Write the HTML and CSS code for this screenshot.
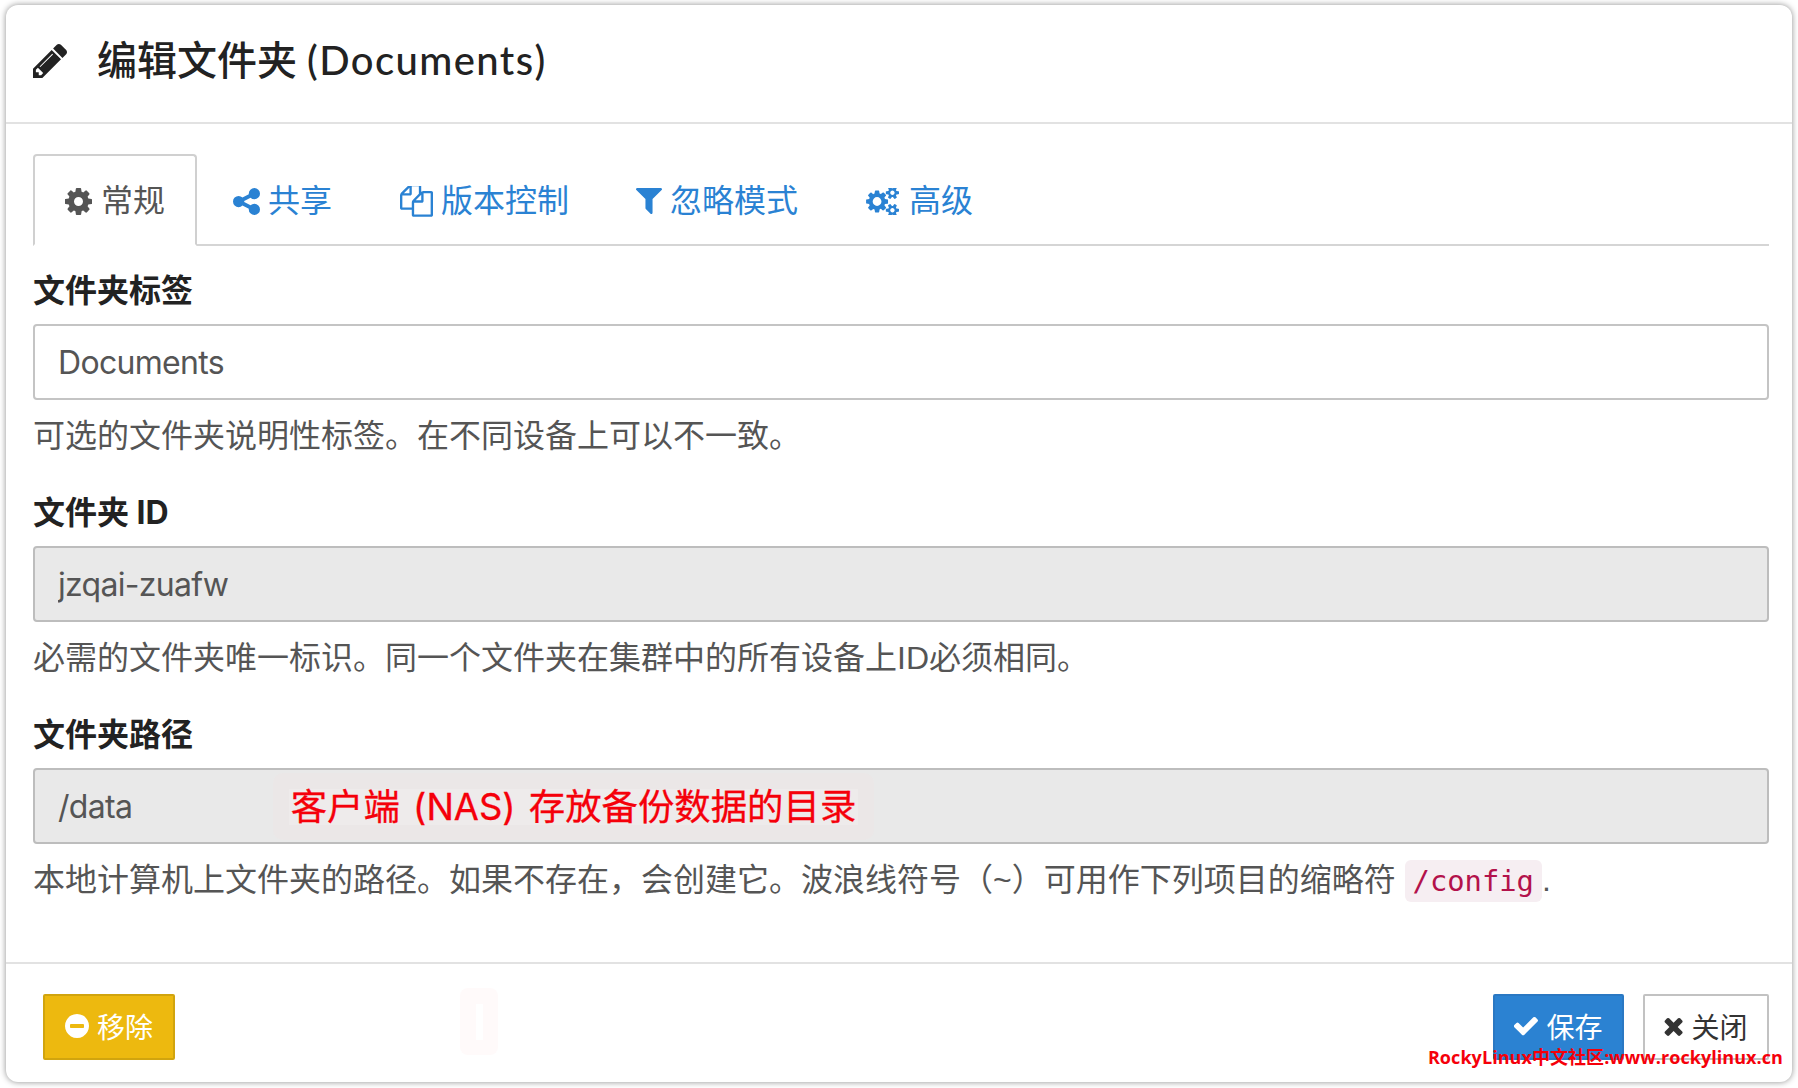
FILE: index.html
```html
<!DOCTYPE html>
<html lang="zh-CN">
<head>
    <meta charset="UTF-8">
    <title>编辑文件夹 (Documents)</title>
    <link rel="stylesheet" href="styles.css">
</head>
<body>

    <div class="modal">
        <!-- Header -->
        <div class="modal-header">
            <svg class="icon icon-pencil" viewBox="128 149 1515 1515"><path d="M491 1536l91-91-235-235-91 91v107h128v128h107zm523-928q0-22-22-22-10 0-17 7l-542 542q-7 7-7 17 0 22 22 22 10 0 17-7l542-542q7-7 7-17zm-54-192l416 416-832 832h-416v-416zm683 96q0 53-37 90l-166 166-416-416 166-165q36-38 90-38 53 0 91 38l235 234q37 39 37 91z"/></svg>
            <h2>编辑文件夹 <span class="title-name">(Documents)</span></h2>
        </div>

        <div class="modal-body">
            <!-- Tabs -->
            <ul class="tabs">
                <li class="tab active">
                    <svg class="icon icon-tab" viewBox="128 128 1536 1536"><path d="M1152 896q0-106-75-181t-181-75-181 75-75 181 75 181 181 75 181-75 75-181zm512-109v222q0 12-8 23t-20 13l-185 28q-19 54-39 91 35 50 107 138 10 12 10 25t-9 23q-27 37-99 108t-94 71q-12 0-26-9l-138-108q-44 23-91 38-16 136-29 186-7 28-36 28h-222q-14 0-24.500-8.500t-11.500-21.500l-28-184q-49-16-90-37l-141 107q-10 9-25 9-14 0-25-11-126-114-165-168-7-10-7-23 0-12 8-23 15-21 51-66.500t54-70.500q-27-50-41-99l-183-27q-13-2-21-12.500t-8-23.500v-222q0-12 8-23t19-13l186-28q14-46 39-92-40-57-107-138-10-12-10-24 0-10 9-23 26-36 98.500-107.500t94.500-71.500q13 0 26 10l138 107q44-23 91-38 16-136 29-186 7-28 36-28h222q14 0 24.500 8.500t11.500 21.500l28 184q49 16 90 37l142-107q9-9 24-9 13 0 25 10 129 119 165 170 7 8 7 22 0 12-8 23-15 21-51 66.500t-54 70.500q26 50 41 98l183 28q13 2 21 12.500t8 23.500z"/></svg>
                    常规
                </li>
                <li class="tab">
                    <svg class="icon icon-tab" viewBox="128 128 1536 1536"><path d="M1344 1024q133 0 226.500 93.500t93.500 226.500-93.500 226.500-226.500 93.500-226.500-93.500-93.500-226.500q0-12 2-34l-360-180q-92 86-218 86-133 0-226.500-93.500t-93.500-226.500 93.500-226.500 226.500-93.500q126 0 218 86l360-180q-2-22-2-34 0-133 93.500-226.500t226.500-93.500 226.500 93.500 93.500 226.500-93.500 226.500-226.500 93.500q-126 0-218-86l-360 180q2 22 2 34t-2 34l360 180q92-86 218-86z"/></svg>
                    共享
                </li>
                <li class="tab tab-tight">
                    <svg class="icon icon-files" viewBox="0 128 1792 1664"><path d="M1696 384q40 0 68 28t28 68v1216q0 40-28 68t-68 28h-960q-40 0-68-28t-28-68v-288h-544q-40 0-68-28t-28-68v-672q0-40 20-88t48-76l408-408q28-28 76-48t88-20h416q40 0 68 28t28 68v328q68-40 128-40h416zm-544 213l-299 299h299v-299zm-640-384l-299 299h299v-299zm196 647l316-316v-416h-384v416q0 40-28 68t-68 28h-416v640h512v-256q0-40 20-88t48-76zm956 804v-1152h-384v416q0 40-28 68t-68 28h-416v640h896z"/></svg>
                    版本控制
                </li>
                <li class="tab tab-tight">
                    <svg class="icon icon-filter" viewBox="192 256 1408 1408"><path d="M1595 295q17 41-14 70l-493 493v742q0 42-39 59-13 5-25 5-27 0-45-19l-256-256q-19-19-19-45v-486l-493-493q-31-29-14-70 17-39 59-39h1280q42 0 59 39z"/></svg>
                    忽略模式
                </li>
                <li class="tab">
                    <svg class="icon icon-cogs" viewBox="0 128 1984 1536"><path d="M960 896q0-106-75-181t-181-75-181 75-75 181 75 181 181 75 181-75 75-181zm768 512q0-52-38-90t-90-38-90 38-38 90q0 53 37.500 90.500t90.500 37.500 90.500-37.500 37.500-90.500zm0-1024q0-52-38-90t-90-38-90 38-38 90q0 53 37.500 90.500t90.500 37.500 90.500-37.500 37.500-90.500zm-384 421v185q0 10-7 19.500t-16 10.500l-155 24q-11 35-32 76 34 48 90 115 7 11 7 20 0 12-7 19-23 30-82.500 89.500t-78.500 59.500q-11 0-21-7l-115-90q-37 19-77 31-11 108-23 155-7 24-30 24h-186q-11 0-20-7.500t-10-17.500l-23-153q-34-10-75-31l-118 89q-7 7-20 7-11 0-21-8-144-133-144-160 0-9 7-19 10-14 41-53t47-61q-23-44-35-82l-152-24q-10-1-17-9.500t-7-19.500v-185q0-10 7-19.500t16-10.500l155-24q11-35 32-76-34-48-90-115-7-11-7-20 0-12 7-20 22-30 82-89t79-59q11 0 21 7l115 90q34-18 77-32 11-108 23-154 7-24 30-24h186q11 0 20 7.500t10 17.500l23 153q34 10 75 31l118-89q8-7 20-7 11 0 21 8 144 133 144 160 0 8-7 19-12 16-42 54t-45 60q23 48 34 82l152 23q10 2 17 10.500t7 19.500zm640 533v140q0 16-149 31-12 27-30 52 51 113 51 138 0 4-4 7-122 71-124 71-8 0-46-47t-52-68q-20 2-30 2t-30-2q-14 21-52 68t-46 47q-2 0-124-71-4-3-4-7 0-25 51-138-18-25-30-52-149-15-149-31v-140q0-16 149-31 13-29 30-52-51-113-51-138 0-4 4-7 4-2 35-20t59-34 30-16q8 0 46 46.500t52 67.500q20-2 30-2t30 2q51-71 92-112l6-2q4 0 124 70 4 3 4 7 0 25-51 138 17 23 30 52 149 15 149 31zm0-1024v140q0 16-149 31-12 27-30 52 51 113 51 138 0 4-4 7-122 71-124 71-8 0-46-47t-52-68q-20 2-30 2t-30-2q-14 21-52 68t-46 47q-2 0-124-71-4-3-4-7 0-25 51-138-18-25-30-52-149-15-149-31v-140q0-16 149-31 13-29 30-52-51-113-51-138 0-4 4-7 4-2 35-20t59-34 30-16q8 0 46 46.500t52 67.500q20-2 30-2t30 2q51-71 92-112l6-2q4 0 124 70 4 3 4 7 0 25-51 138 17 23 30 52 149 15 149 31z"/></svg>
                    高级
                </li>
            </ul>

            <!-- Fields -->
            <div class="form-group">
                <label>文件夹标签</label>
                <input type="text" value="Documents">
                <p class="help">可选的文件夹说明性标签。在不同设备上可以不一致。</p>
            </div>

            <div class="form-group">
                <label>文件夹 ID</label>
                <input type="text" value="jzqai-zuafw" disabled>
                <p class="help">必需的文件夹唯一标识。同一个文件夹在集群中的所有设备上ID必须相同。</p>
            </div>

            <div class="form-group">
                <label>文件夹路径</label>
                <div class="input-wrap">
                    <input type="text" value="/data" disabled>
                    <span class="note"><span class="note-text">客户端 (NAS) 存放备份数据的目录</span></span>
                </div>
                <p class="help">本地计算机上文件夹的路径。如果不存在，会创建它。波浪线符号（~）可用作下列项目的缩略符 <code>/config</code>.</p>
            </div>
        </div>

        <!-- Footer -->
        <div class="modal-footer">
            <button class="btn btn-warning">
                <svg class="icon icon-btn" viewBox="128 128 1536 1536"><path d="M1344 960v-128q0-26-19-45t-45-19h-768q-26 0-45 19t-19 45v128q0 26 19 45t45 19h768q26 0 45-19t19-45zm320-64q0 209-103 385.500t-279.500 279.500-385.500 103-385.500-103-279.500-279.500-103-385.500 103-385.500 279.500-279.500 385.500-103 385.500 103 279.500 279.500 103 385.500z"/></svg>
                移除
            </button>
            <div class="footer-right">
                <button class="btn btn-primary">
                    <svg class="icon icon-btn" viewBox="128 320 1543 1200"><path d="M1671 566q0 40-28 68l-724 724-136 136q-28 28-68 28t-68-28l-136-136-362-362q-28-28-28-68t28-68l136-136q28-28 68-28t68 28l294 295 656-657q28-28 68-28t68 28l136 136q28 28 28 68z"/></svg>
                    保存
                </button>
                <button class="btn btn-default">
                    <svg class="icon icon-close" viewBox="290 238 1200 1316"><path d="M1490 1322q0 40-28 68l-136 136q-28 28-68 28t-68-28l-294-294-294 294q-28 28-68 28t-68-28l-136-136q-28-28-28-68t28-68l294-294-294-294q-28-28-28-68t28-68l136-136q28-28 68-28t68 28l294 294 294-294q28-28 68-28t68 28l136 136q28 28 28 68t-28 68l-294 294 294 294q28 28 28 68z"/></svg>
                    关闭
                </button>
            </div>
        </div>

        <div class="smudge"><span></span></div>
        <div class="watermark">RockyLinux中文社区:www.rockylinux.cn</div>
    </div>

</body>
</html>
```

FILE: styles.css
```css
* {
    box-sizing: border-box;
}
html, body {
    height: 100%;
}
body {
    margin: 0;
    padding: 5px 6px 6px 6px;
    background: #fff;
    color: #555;
    font-family: Inter, "Noto Sans CJK SC", sans-serif;
    font-size: 32px;
    line-height: 46px;
    overflow: hidden;
}
.modal {
    position: relative;
    display: flex;
    flex-direction: column;
    height: 1077px;
    border-radius: 12px;
    background: #fff;
    box-shadow: 0 0 6px rgba(0, 0, 0, 0.45);
}
.icon {
    display: inline-block;
    fill: currentColor;
    flex: none;
}

/* Header */
.modal-header {
    display: flex;
    align-items: center;
    height: 119px;
    padding-left: 27px;
    border-bottom: 2px solid #e2e2e2;
    color: #222;
}
.modal-header h2 {
    margin: 0 0 8px 30px;
    font-family: Lato, "Noto Sans CJK SC", sans-serif;
    font-size: 40px;
    font-weight: 500;
    line-height: 56px;
}
.title-name {
    letter-spacing: 1.4px;
}
.icon-pencil {
    width: 34px;
    height: 34px;
    margin-bottom: 6px;
}

/* Tabs */
.modal-body {
    flex: 1;
    padding: 30px 23px 0 27px;
}
.tabs {
    display: flex;
    height: 92px;
    margin: 0 0 22px 0;
    padding: 0;
    list-style: none;
    border-bottom: 2px solid #d5d5d5;
}
.tab {
    display: flex;
    align-items: center;
    gap: 8px;
    height: 92px;
    margin-right: 4px;
    padding: 2px 30px 0 30px;
    border: 2px solid transparent;
    color: #2a82d3;
    white-space: nowrap;
}
.tab.active {
    gap: 9px;
    border-color: #d0d0d0;
    border-bottom-color: #fff;
    border-radius: 4px 4px 0 0;
    color: #555;
}
.tab-tight {
    margin-right: 3px;
}
.icon-tab {
    width: 27px;
    height: 27px;
}
.icon-files {
    width: 33px;
    height: 31px;
}
.icon-filter {
    width: 26px;
    height: 26px;
}
.icon-cogs {
    width: 34px;
    height: 27px;
    margin-right: 2px;
}

/* Fields */
.form-group {
    margin-bottom: 31px;
}
label {
    display: block;
    margin-bottom: 10px;
    color: #222;
    font-weight: 700;
}
input {
    display: block;
    width: 100%;
    height: 76px;
    padding: 0 23px;
    border: 2px solid #c4c4c4;
    border-radius: 4px;
    background: #fff;
    color: #555;
    font: inherit;
    letter-spacing: -0.7px;
    opacity: 1;
}
input:disabled {
    border-color: #bdbdbd;
    background: #e9e9e9;
    color: #555;
}
.help {
    margin: 13px 0 0 0;
    height: 46px;
    color: #555;
    font-family: "Liberation Sans", "Noto Sans CJK SC", sans-serif;
    white-space: nowrap;
}
code {
    padding: 4px 8px;
    border-radius: 6px;
    background: #f6eef2;
    color: #b3124b;
    font-family: "DejaVu Sans Mono", monospace;
    font-size: 28.8px;
}

/* Red note painted over the path field */
.input-wrap {
    position: relative;
}
.note {
    position: absolute;
    left: 240px;
    top: 5px;
    display: flex;
    align-items: center;
    justify-content: center;
    width: 601px;
    height: 67px;
    border-radius: 10px;
    background: #ebe7e7;
}
.note-text {
    padding: 0 2px;
    background: #eeebeb;
    color: #f5000a;
    font-size: 36.4px;
    line-height: 36px;
    word-spacing: 3px;
    white-space: nowrap;
    -webkit-text-stroke: 0.3px #f5000a;
}

/* Footer */
.modal-footer {
    display: flex;
    justify-content: space-between;
    height: 120px;
    padding: 30px 23px 0 37px;
    border-top: 2px solid #e2e2e2;
}
.footer-right {
    display: flex;
    gap: 19px;
}
.btn {
    display: flex;
    align-items: center;
    justify-content: center;
    gap: 8px;
    height: 66px;
    padding: 0 0 3px 0;
    border: 2px solid;
    border-radius: 2px;
    font-family: inherit;
    font-size: 28px;
    white-space: nowrap;
}
.btn-warning {
    width: 132px;
    border-color: #d1a40e;
    background: #edb90f;
    color: #fff;
}
.btn-primary {
    width: 131px;
    border-color: #2a78c3;
    background: #2b82d2;
    color: #fff;
}
.btn-default {
    width: 126px;
    border-color: #c2c2c2;
    background: #fff;
    color: #333;
}
.icon-btn {
    width: 24px;
    height: 24px;
}
.icon-close {
    width: 19px;
    height: 20px;
}

/* Overlays */
.smudge {
    position: absolute;
    left: 454px;
    top: 983px;
    display: flex;
    align-items: center;
    justify-content: center;
    width: 38px;
    height: 67px;
    border-radius: 8px;
    background: #fffafa;
}
.smudge span {
    width: 7px;
    height: 36px;
    background: #fff;
}
.watermark {
    position: absolute;
    right: 9px;
    bottom: 13px;
    color: #f5000a;
    font-family: "Open Sans", "Noto Sans CJK SC", sans-serif;
    font-size: 18px;
    font-weight: 700;
    letter-spacing: 0.06px;
    line-height: 24px;
    white-space: nowrap;
}
```
